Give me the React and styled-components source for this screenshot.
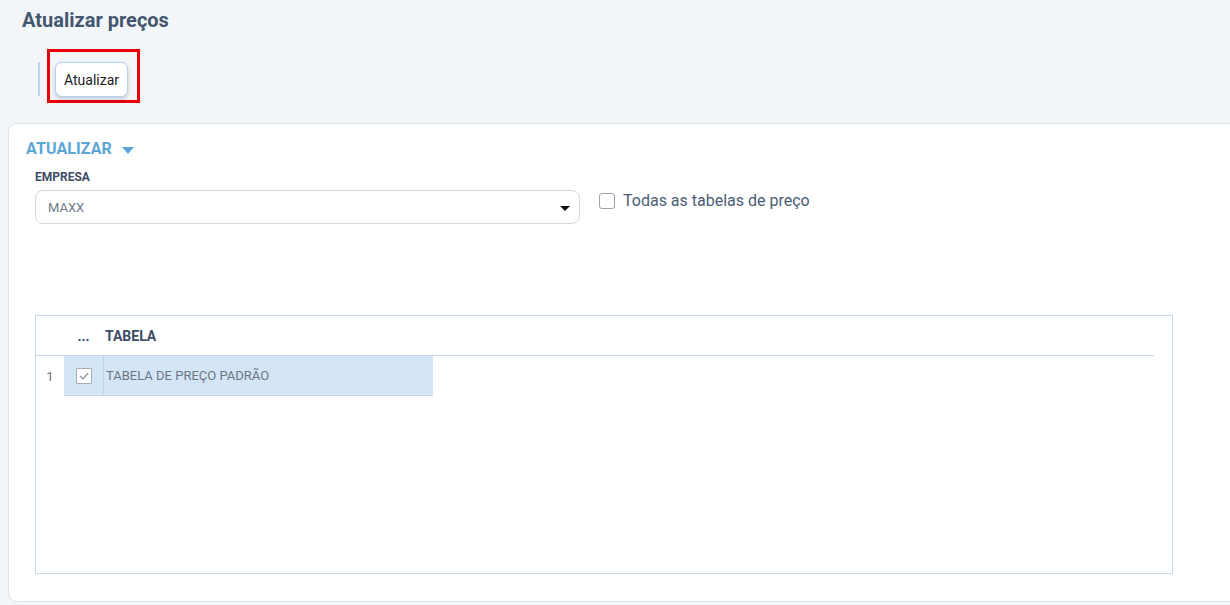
import React from "react";
import styled, { createGlobalStyle } from "styled-components";

const GlobalStyle = createGlobalStyle`
	html, body {
		margin: 0;
		padding: 0;
		background: #f3f6f9;
		font-family: Roboto, "Liberation Sans", Arial, sans-serif;
		overflow: hidden;
	}
	* {
		box-sizing: border-box;
	}
`;

const Page = styled.div`
	width: 1230px;
	height: 605px;
	display: flex;
	flex-direction: column;
	overflow: hidden;
`;

const Header = styled.div`
	padding: 7px 0 0 22px;
`;

const Title = styled.h1`
	margin: 0;
	font-size: 20px;
	line-height: 26px;
	font-weight: 700;
	color: #44566f;
`;

const Toolbar = styled.div`
	display: flex;
	align-items: flex-start;
	margin: 16px 0 0 16px;
	gap: 7px;
`;

const Divider = styled.span`
	width: 2px;
	height: 34px;
	margin-top: 13px;
	background: #bcd5ef;
`;

const Highlight = styled.div`
	border: 3px solid #e8000b;
	padding: 10px 9px 3px 5px;
`;

const ToolButton = styled.button`
	height: 35px;
	padding: 0 8px;
	background: #fff;
	border: 1px solid #b8d2ee;
	border-radius: 7px;
	box-shadow: 0 2px 4px rgba(40, 60, 90, 0.25);
	font-family: inherit;
	font-size: 14px;
	color: #1d1d1d;
	cursor: pointer;
`;

const Card = styled.section`
	margin: 20px -14px 0 8px;
	padding: 15px 0 27px 0;
	background: #fff;
	border: 1px solid #dde3ea;
	border-radius: 9px;
`;

const SectionTitle = styled.div`
	display: flex;
	align-items: center;
	gap: 10px;
	margin-left: 17px;
	font-size: 16px;
	line-height: 20px;
	font-weight: 700;
	color: #5aa6d5;
	letter-spacing: 0.1px;
`;

const Caret = styled.span`
	width: 0;
	height: 0;
	border-left: 6px solid transparent;
	border-right: 6px solid transparent;
	border-top: 7px solid ${(p) => p.color || "#5aa6d5"};
	margin-top: 2px;
`;

const FormRow = styled.div`
	display: flex;
	align-items: flex-start;
	gap: 19px;
	margin: 10px 0 0 26px;
`;

const Field = styled.div`
	width: 545px;
	display: flex;
	flex-direction: column;
	gap: 5px;
`;

const Label = styled.label`
	font-size: 12px;
	line-height: 16px;
	font-weight: 700;
	color: #3d4d66;
`;

const Select = styled.div`
	height: 34px;
	display: flex;
	align-items: center;
	justify-content: space-between;
	padding: 0 5px 0 12px;
	border: 1px solid #d3d9e0;
	border-radius: 8px;
	font-size: 13px;
	color: #6f7a87;
`;

const SelectCaret = styled.span`
	width: 0;
	height: 0;
	border-left: 5px solid transparent;
	border-right: 5px solid transparent;
	border-top: 5px solid #111;
	margin: 2px 4px 0 0;
`;

const CheckField = styled.label`
	display: flex;
	align-items: center;
	gap: 8px;
	margin-top: 24px;
	font-size: 16px;
	line-height: 16px;
	color: #4b5d76;
`;

const Box = styled.span`
	width: 16px;
	height: 16px;
	border: 1px solid ${(p) => (p.checked ? "#a3abb4" : "#9aa3ad")};
	border-radius: ${(p) => (p.checked ? "1px" : "3px")};
	background: #fff;
	display: flex;
	align-items: center;
	justify-content: center;
`;

const Grid = styled.div`
	height: 259px;
	margin: 91px 70px 0 26px;
	border: 1px solid #c6d6e6;
	padding-right: 18px;
`;

const HeadRow = styled.div`
	display: flex;
	height: 40px;
	border-bottom: 1px solid #c6d6e6;
`;

const DataRow = styled.div`
	display: flex;
	height: 40px;
`;

const Cell = styled.div`
	width: ${(p) => p.w}px;
	display: flex;
	align-items: center;
	justify-content: ${(p) => (p.center ? "center" : "flex-start")};
	padding-left: ${(p) => (p.center ? 0 : 2)}px;
	font-size: 13px;
	background: ${(p) => (p.selected ? "#d5e5f8" : "transparent")};
	border-left: ${(p) => (p.divide ? "1px solid #c4d6ec" : "none")};
	border-bottom: ${(p) => (p.selected ? "1px solid #c4d6ec" : "none")};
	color: #6b7684;
`;

const HeadCell = styled(Cell)`
	font-size: 14px;
	font-weight: 700;
	color: #3b4c66;
`;

const Check = () => (
	<svg width="12" height="12" viewBox="0 0 12 12">
		<path d="M2 6 L4.8 8.8 L10.2 3.2" fill="none" stroke="#8e969f" strokeWidth="1.3" />
	</svg>
);

export default function App() {
	return (
		<Page>
			<GlobalStyle />
			<Header>
				<Title>Atualizar preços</Title>
				<Toolbar>
					<Divider />
					<Highlight>
						<ToolButton>Atualizar</ToolButton>
					</Highlight>
				</Toolbar>
			</Header>
			<Card>
				<SectionTitle>
					ATUALIZAR <Caret />
				</SectionTitle>
				<FormRow>
					<Field>
						<Label>EMPRESA</Label>
						<Select>
							MAXX
							<SelectCaret />
						</Select>
					</Field>
					<CheckField>
						<Box />
						Todas as tabelas de preço
					</CheckField>
				</FormRow>
				<Grid>
					<HeadRow>
						<HeadCell w={28} />
						<HeadCell w={39} center>
							...
						</HeadCell>
						<HeadCell w={330}>TABELA</HeadCell>
					</HeadRow>
					<DataRow>
						<Cell w={28} center>
							1
						</Cell>
						<Cell w={39} center selected>
							<Box checked>
								<Check />
							</Box>
						</Cell>
						<Cell w={330} selected divide>
							TABELA DE PREÇO PADRÃO
						</Cell>
					</DataRow>
				</Grid>
			</Card>
		</Page>
	);
}
